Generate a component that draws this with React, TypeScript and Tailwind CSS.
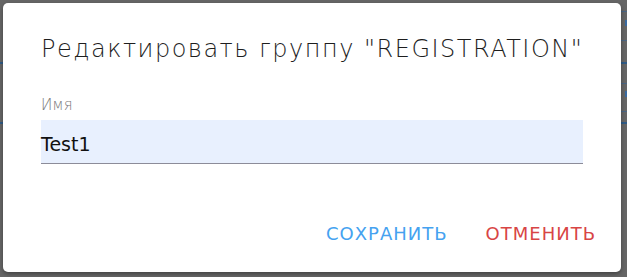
export default function App() {
  return (
    <div className="relative h-[277px] w-[627px] overflow-hidden bg-[#666666] font-['DejaVu_Sans',sans-serif]">
      {/* page behind the overlay */}
      <div className="flex flex-col">
        <div className="mt-[11px] ml-auto h-px w-[20px] bg-[#4a6583]" />
        <div className="mt-[8px] ml-auto h-[6px] w-[2px] bg-[#3a6aa0]" />
        <div className="mt-[14px] ml-auto h-px w-[20px] bg-[#4a6583]" />
        <div className="mt-[21px] h-[2px] w-full bg-[#2f5b86]" />
        <div className="mt-[19px] ml-auto h-px w-[20px] bg-[#4a6583]" />
        <div className="mt-[7px] ml-auto h-[6px] w-[2px] bg-[#3a6aa0]" />
        <div className="mt-[14px] ml-auto h-px w-[20px] bg-[#4a6583]" />
        <div className="mt-[10px] h-[2px] w-full bg-[#2f5b86]" />
      </div>

      {/* dialog */}
      <div className="absolute left-[3px] top-[3px] flex h-[269px] w-[618px] flex-col rounded-[5px] bg-white shadow-[0_2px_4px_rgba(0,0,0,0.35)]">
        <div className="px-[38px] pt-[30px]">
          <h2 className="text-[24px] leading-[32px] font-light tracking-[1.5px] whitespace-nowrap text-[#1e1e1e]">
            Редактировать группу "REGISTRATION"
          </h2>
          <div className="mt-[30px] text-[15px] leading-[20px] font-light text-[#7a7a7a]">Имя</div>
          <div className="mt-[5px] h-[44px] border-b border-[#8c8c99] bg-[#e8f0fe] pt-[12px] text-[19px] leading-[24px] text-[#111111]">
            Test1
          </div>
        </div>
        <div className="mt-auto mb-[26px] flex justify-end gap-[22px] pr-[17px]">
          <button className="px-[8px] text-[18px] leading-[24px] tracking-[1px] text-[#45a2f0]">СОХРАНИТЬ</button>
          <button className="px-[8px] text-[18px] leading-[24px] tracking-[1px] text-[#d84545]">ОТМЕНИТЬ</button>
        </div>
      </div>
    </div>
  );
}
